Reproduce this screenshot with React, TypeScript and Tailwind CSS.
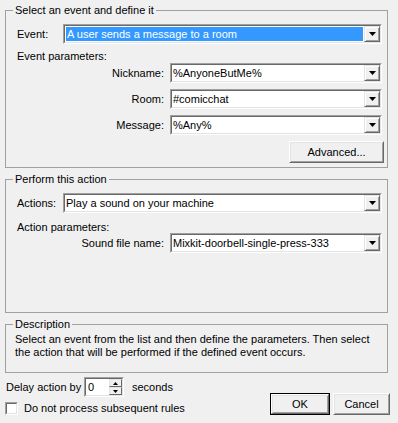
import React from "react";

function Arrow() {
  return (
    <svg width="7" height="4" viewBox="0 0 7 4">
      <path d="M0 0H7L3.5 4Z" fill="#000" />
    </svg>
  );
}

function SmallArrow({ up }: { up?: boolean }) {
  return (
    <svg width="5" height="3" viewBox="0 0 5 3">
      <path d={up ? "M0 3H5L2.5 0Z" : "M0 0H5L2.5 3Z"} fill="#000" />
    </svg>
  );
}

function DropBtn() {
  return (
    <div className="flex h-[16px] w-[16px] items-center justify-center border border-t-[#e3e3e3] border-l-[#e3e3e3] border-b-[#696969] border-r-[#696969] bg-[#f0f0f0] shadow-[inset_1px_1px_0_#fff,inset_-1px_-1px_0_#a0a0a0]">
      <Arrow />
    </div>
  );
}

function Combo({ text, selected, width }: { text: string; selected?: boolean; width: string }) {
  return (
    <div className={`flex h-[20px] ${width} border border-t-[#a0a0a0] border-l-[#a0a0a0] border-b-white border-r-white`}>
      <div className="flex flex-1 border border-t-[#696969] border-l-[#696969] border-b-[#e3e3e3] border-r-[#e3e3e3] bg-white">
        <div className="flex flex-1 p-[1px]">
          {selected ? (
            <div className="flex flex-1 items-center bg-[#3399ff] pl-[1px] text-white">{text}</div>
          ) : (
            <div className="flex flex-1 items-center text-black">{text}</div>
          )}
        </div>
        <DropBtn />
      </div>
    </div>
  );
}

function Button({ label, width, isDefault }: { label: string; width: string; isDefault?: boolean }) {
  return (
    <div className={`flex h-[22px] ${width} ${isDefault ? "border border-black" : ""}`}>
      <div className="flex flex-1 items-center justify-center border border-t-white border-l-white border-b-[#696969] border-r-[#696969] bg-[#f0f0f0] shadow-[inset_1px_1px_0_#e3e3e3,inset_-1px_-1px_0_#a0a0a0]">
        {label}
      </div>
    </div>
  );
}

function Group({ title, className, children }: { title: string; className: string; children: React.ReactNode }) {
  return (
    <fieldset className={`w-[383px] border border-[#a0a0a0] ${className}`}>
      <legend className="ml-[7px] px-[2px] leading-[13px]">{title}</legend>
      {children}
    </fieldset>
  );
}

export default function App() {
  return (
    <div className="h-[423px] w-[398px] overflow-hidden bg-[#f0f0f0] px-[5px] pt-[4px] font-['Liberation_Sans',Arial,sans-serif] text-[11px] leading-[13px] text-black">
      <Group title="Select an event and define it" className="pb-[4px]">
        <div className="flex flex-col pt-[7px]">
          <div className="flex h-[20px] items-center pl-[11px]">
            <span className="w-[46px]">Event:</span>
            <Combo text="A user sends a message to a room" selected width="w-[319px]" />
          </div>
          <div className="mt-[6px] h-[13px] pl-[11px]">Event parameters:</div>
          <div className="flex h-[20px] items-center">
            <span className="w-[159px] pr-[1px] text-right">Nickname:</span>
            <div className="ml-[5px]">
              <Combo text="%AnyoneButMe%" width="w-[212px]" />
            </div>
          </div>
          <div className="mt-[6px] flex h-[20px] items-center">
            <span className="w-[159px] pr-[1px] text-right">Room:</span>
            <div className="ml-[5px]">
              <Combo text="#comicchat" width="w-[212px]" />
            </div>
          </div>
          <div className="mt-[6px] flex h-[20px] items-center">
            <span className="w-[159px] pr-[1px] text-right">Message:</span>
            <div className="ml-[5px]">
              <Combo text="%Any%" width="w-[212px]" />
            </div>
          </div>
          <div className="mt-[6px] flex justify-end pr-[3px]">
            <Button label="Advanced..." width="w-[95px]" />
          </div>
        </div>
      </Group>

      <Group title="Perform this action" className="mt-[5px] h-[140px]">
        <div className="flex flex-col pt-[7px]">
          <div className="flex h-[20px] items-center pl-[11px]">
            <span className="w-[46px]">Actions:</span>
            <Combo text="Play a sound on your machine" width="w-[319px]" />
          </div>
          <div className="mt-[8px] h-[12px] pl-[11px] leading-[12px]">Action parameters:</div>
          <div className="flex h-[20px] items-center">
            <span className="w-[159px] pr-[1px] text-right">Sound file name:</span>
            <div className="ml-[5px]">
              <Combo text="Mixkit-doorbell-single-press-333" width="w-[212px]" />
            </div>
          </div>
        </div>
      </Group>

      <Group title="Description" className="mt-[5px] h-[55px]">
        <div className="pl-[9px] pr-[4px] pt-[2px]">
          Select an event from the list and then define the parameters. Then select the action that will be performed if the defined event occurs.
        </div>
      </Group>

      <div className="flex w-[385px] justify-between">
        <div className="mt-[4px] flex flex-col">
          <div className="flex h-[20px] items-center">
            <span className="ml-[1px] w-[78px] whitespace-nowrap">Delay action by</span>
            <div className="flex h-[20px] w-[40px] border border-t-[#a0a0a0] border-l-[#a0a0a0] border-b-white border-r-white">
              <div className="flex flex-1 border border-t-[#696969] border-l-[#696969] border-b-[#e3e3e3] border-r-[#e3e3e3] bg-white">
                <div className="flex flex-1 items-center pl-[2px]">0</div>
                <div className="flex w-[13px] flex-col">
                  <div className="flex h-[8px] items-center justify-center border border-t-[#e3e3e3] border-l-[#e3e3e3] border-b-[#696969] border-r-[#696969] bg-[#f0f0f0]">
                    <SmallArrow up />
                  </div>
                  <div className="flex h-[8px] items-center justify-center border border-t-[#e3e3e3] border-l-[#e3e3e3] border-b-[#696969] border-r-[#696969] bg-[#f0f0f0]">
                    <SmallArrow />
                  </div>
                </div>
              </div>
            </div>
            <span className="ml-[8px]">seconds</span>
          </div>
          <div className="mt-[5px] flex h-[13px] items-center">
            <div className="h-[13px] w-[13px] border border-t-[#a0a0a0] border-l-[#a0a0a0] border-b-white border-r-white">
              <div className="h-full w-full border border-t-[#696969] border-l-[#696969] border-b-[#e3e3e3] border-r-[#e3e3e3] bg-white" />
            </div>
            <span className="ml-[6px]">Do not process subsequent rules</span>
          </div>
        </div>
        <div className="mt-[20px] flex gap-[3px]">
          <Button label="OK" width="w-[60px]" isDefault />
          <Button label="Cancel" width="w-[57px]" />
        </div>
      </div>
    </div>
  );
}
